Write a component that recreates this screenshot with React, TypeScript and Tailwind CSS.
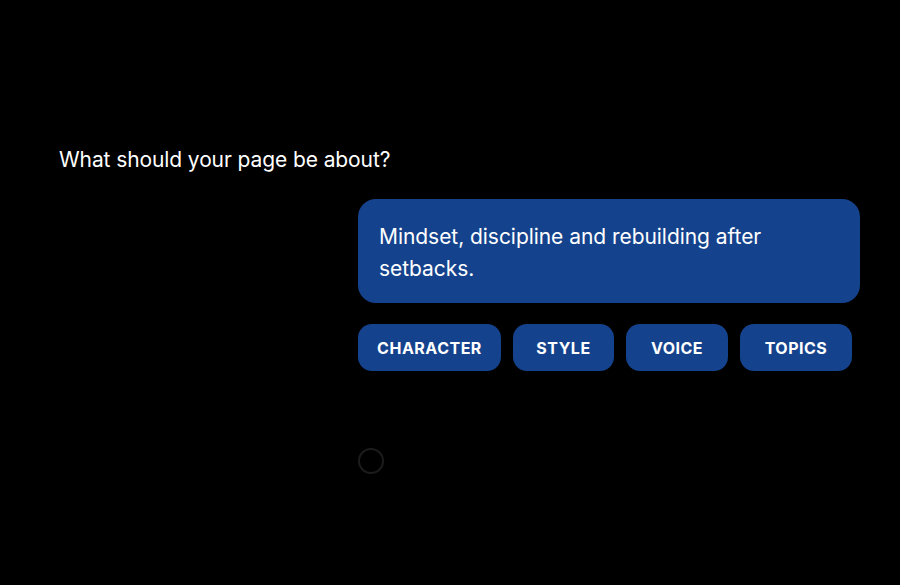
const TAGS = [
  { label: "Character", w: "w-[143px]" },
  { label: "Style", w: "w-[101px]" },
  { label: "Voice", w: "w-[102px]" },
  { label: "Topics", w: "w-[112px]" },
];

export default function App() {
  return (
    <div
      className="h-[585px] w-full overflow-hidden bg-black text-white"
      style={{ fontFamily: "Inter, 'Noto Sans', sans-serif" }}
    >
      <div className="pt-[145px] pl-[59px] pr-[40px]">
        <h1 className="text-[21px] leading-[30px] font-normal tracking-[-0.1px]">
          What should your page be about?
        </h1>

        <div className="ml-[299px] mt-[24px] flex flex-col">
          {/* answer bubble */}
          <div className="rounded-[18px] bg-[#15428c] px-[21px] pt-[22px] pb-[18px]">
            <p className="text-[21px] leading-[32px] tracking-[-0.05px] pr-[40px]">
              Mindset, discipline and rebuilding after setbacks.
            </p>
          </div>

          {/* refine chips */}
          <div className="mt-[21px] flex gap-[12px]">
            {TAGS.map((t) => (
              <button
                key={t.label}
                type="button"
                className={`h-[47px] ${t.w} rounded-[14px] bg-[#15428c] text-center text-[16px] font-bold uppercase tracking-[0.5px]`}
              >
                {t.label}
              </button>
            ))}
          </div>

          {/* loading ring */}
          <div className="mt-[77px] h-[26px] w-[26px] rounded-full border-2 border-[#1c1c1c]" />
        </div>
      </div>
    </div>
  );
}
